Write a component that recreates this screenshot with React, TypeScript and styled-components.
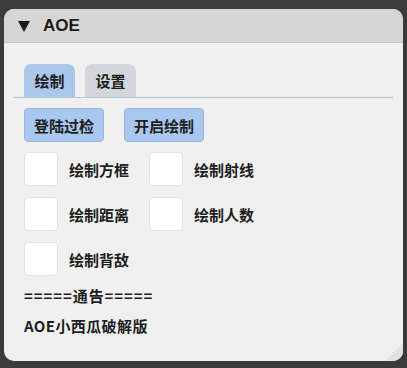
import React, { useState } from "react";
import styled, { createGlobalStyle } from "styled-components";

const Global = createGlobalStyle`
  html, body { margin: 0; padding: 0; background: #3b3b3b; }
  body { font-family: "Noto Sans CJK SC", "Noto Sans", sans-serif; font-weight: 700; color: #1e1e1e; }
`;

const Page = styled.div`
  padding: 9px 4px 7px 4px;
  height: 368px;
  box-sizing: border-box;
`;

const Window = styled.div`
  position: relative;
  width: 399px;
  height: 352px;
  background: #f0f0f0;
  border-radius: 10px;
  overflow: hidden;
  display: flex;
  flex-direction: column;
`;

const TitleBar = styled.div`
  height: 33px;
  background: #d6d6d6;
  border-bottom: 1px solid #c4c4c4;
  display: flex;
  align-items: center;
  padding-left: 14px;
  gap: 13px;
  font-family: "Liberation Sans", "Noto Sans", sans-serif;
  font-size: 17px;
  font-weight: 700;
  color: #1a1a1a;
`;

const Triangle = styled.span`
  width: 0;
  height: 0;
  border-left: 6px solid transparent;
  border-right: 6px solid transparent;
  border-top: 11px solid #1a1a1a;
  margin-top: 1px;
`;

const Content = styled.div`
  padding: 21px 10px 0 10px;
  display: flex;
  flex-direction: column;
`;

const TabBar = styled.div`
  display: flex;
  gap: 10px;
  padding-left: 10px;
  border-bottom: 1px solid #b7c3d2;
`;

const Tab = styled.div<{ $active?: boolean }>`
  width: 51px;
  height: 33px;
  border-radius: 7px 7px 0 0;
  background: ${(p) => (p.$active ? "#a9c7ea" : "#d3d6db")};
  display: flex;
  align-items: center;
  justify-content: center;
  font-size: 15px;
  color: #1e1e1e;
`;

const ButtonRow = styled.div`
  display: flex;
  gap: 20px;
  padding: 10px 0 0 10px;
`;

const Button = styled.div`
  width: 78px;
  height: 32px;
  border: 1px solid #96b3d6;
  border-radius: 4px;
  background: #a9c8ef;
  display: flex;
  align-items: center;
  justify-content: center;
  font-size: 15px;
  color: #1e1e1e;
`;

const Grid = styled.div`
  display: grid;
  grid-template-columns: 125px 125px;
  row-gap: 11px;
  padding: 10px 0 0 10px;
`;

const CheckItem = styled.label`
  display: flex;
  align-items: center;
  gap: 11px;
  font-size: 15px;
  cursor: pointer;
`;

const Box = styled.span`
  width: 32px;
  height: 32px;
  border: 1px solid #e2e2e2;
  border-radius: 4px;
  background: #ffffff;
  display: flex;
  align-items: center;
  justify-content: center;
  box-sizing: content-box;
`;

const Notice = styled.div`
  padding: 10px 0 0 10px;
  font-size: 15px;
  line-height: 20px;
  letter-spacing: 0.9px;
`;

const Credit = styled.div`
  padding: 10px 0 0 10px;
  font-size: 15px;
  line-height: 20px;
  letter-spacing: 0.4px;
`;

const Grip = styled.svg`
  position: absolute;
  right: 0;
  bottom: 0;
`;

const items = ["绘制方框", "绘制射线", "绘制距离", "绘制人数", "绘制背敌"];

export default function App() {
  const [checked, setChecked] = useState<Record<string, boolean>>({});
  return (
    <>
      <Global />
      <Page>
        <Window>
          <TitleBar>
            <Triangle />
            <span>AOE</span>
          </TitleBar>
          <Content>
            <TabBar>
              <Tab $active>绘制</Tab>
              <Tab>设置</Tab>
            </TabBar>
            <ButtonRow>
              <Button>登陆过检</Button>
              <Button>开启绘制</Button>
            </ButtonRow>
            <Grid>
              {items.map((t) => (
                <CheckItem key={t} onClick={() => setChecked((c) => ({ ...c, [t]: !c[t] }))}>
                  <Box>
                    {checked[t] && (
                      <svg width="20" height="20" viewBox="0 0 20 20">
                        <path d="M4 10 L8 14 L16 5" stroke="#4a7fc1" strokeWidth="3" fill="none" />
                      </svg>
                    )}
                  </Box>
                  {t}
                </CheckItem>
              ))}
            </Grid>
            <Notice>=====通告=====</Notice>
            <Credit>AOE小西瓜破解版</Credit>
          </Content>
          <Grip width="22" height="22" viewBox="0 0 22 22">
            <path d="M22 4 L22 22 L4 22 Z" fill="#e2e2e2" />
          </Grip>
        </Window>
      </Page>
    </>
  );
}
